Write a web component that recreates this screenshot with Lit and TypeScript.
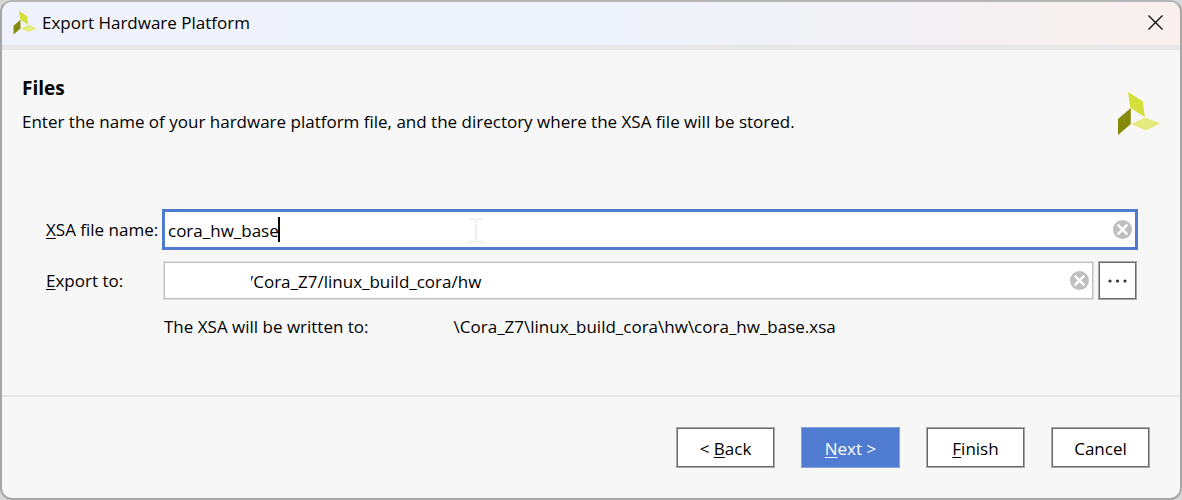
import { LitElement, html, css, svg } from "lit";
import { customElement, property, state } from "lit/decorators.js";

@customElement("brand-mark")
class BrandMark extends LitElement {
  static styles = css`
    :host {
      display: block;
      flex: none;
    }
    svg {
      display: block;
      width: 100%;
      height: 100%;
    }
  `;
  render() {
    return html`<svg viewBox="0 0 44 44" aria-hidden="true">
      <path d="M11 0 25.8 9.2 27.8 25 13.5 16Z" fill="#d5df3a" />
      <path d="M1 27 13.8 16V32L1 43Z" fill="#858a0c" />
      <path d="M14 32 28 25.5 43.5 31.3 29 38.5Z" fill="#e4ea7c" />
    </svg>`;
  }
}

@customElement("clear-button")
class ClearButton extends LitElement {
  @property() label = "Clear";
  static styles = css`
    :host {
      display: block;
      flex: none;
    }
    button {
      display: block;
      width: 19px;
      height: 19px;
      padding: 0;
      border: 0;
      background: none;
    }
    svg {
      display: block;
    }
  `;
  render() {
    return html`<button type="button" aria-label=${this.label}>
      ${svg`<svg width="19" height="19" viewBox="0 0 19 19">
        <circle cx="9.5" cy="9.5" r="9.5" fill="#bfbfbf" />
        <path d="M4.7 4.7 14.3 14.3M14.3 4.7 4.7 14.3" stroke="#fff" stroke-width="2.4" />
      </svg>`}
    </button>`;
  }
}

@customElement("app-root")
class AppRoot extends LitElement {
  @state() private fileName = "cora_hw_base";
  @state() private directory = "/Cora_Z7/linux_build_cora/hw";

  static styles = css`
    :host {
      display: block;
      min-height: 100vh;
      box-sizing: border-box;
      background: #d8d8d8;
      color: #000;
      font: 17px/24px "Open Sans", "Segoe UI", sans-serif;
    }
    * {
      box-sizing: border-box;
    }
    .window {
      display: flex;
      flex-direction: column;
      min-height: 100vh;
      border: 2px solid #a6a6a6;
      border-top-color: #b5b5b5;
      border-radius: 12px;
      overflow: hidden;
      background: #f7f7f7;
    }
    .titlebar {
      display: flex;
      align-items: center;
      gap: 5px;
      height: 48px;
      padding: 0 17px 2px 11px;
      border-bottom: 5px solid #e6e6e6;
      background: linear-gradient(90deg, #eff2fa 0%, #eff3fb 50%, #f2f1f5 75%, #f9f0ee 100%);
    }
    .small-mark {
      width: 24px;
      height: 24px;
    }
    .title {
      flex: 1;
      margin: 0;
      font-size: 17px;
      font-weight: 400;
    }
    .close {
      width: 15px;
      height: 15px;
      padding: 0;
      border: 0;
      background: none;
    }
    .close svg {
      display: block;
    }
    .intro {
      display: flex;
      justify-content: space-between;
      padding: 26px 19px 0 20px;
    }
    .intro h2 {
      margin: 0 0 10px;
      font-size: 19px;
      line-height: 24px;
      font-weight: 700;
    }
    .intro p {
      margin: 0;
    }
    .large-mark {
      width: 44px;
      height: 44px;
      margin-top: 16px;
    }
    .form {
      display: grid;
      grid-template-columns: 116px 1fr;
      row-gap: 11px;
      align-items: center;
      flex: 1;
      align-content: start;
      padding: 73px 42px 0 44px;
    }
    label {
      white-space: nowrap;
    }
    u {
      text-decoration-thickness: 1px;
      text-underline-offset: 2px;
    }
    .field {
      display: flex;
      align-items: center;
      flex: 1;
      min-width: 0;
      background: #fff;
    }
    .field input {
      border: 0;
      outline: 0;
      padding: 2px 0 0;
      height: 30px;
      background: none;
      color: inherit;
      font: inherit;
    }
    .focused {
      position: relative;
      height: 41px;
      padding: 0 3px;
      border: 3px solid #4f7bd0;
    }
    .focused input {
      field-sizing: content;
    }
    .caret {
      width: 2px;
      height: 25px;
      margin-left: -1px;
      background: #000;
    }
    .spring {
      flex: 1;
    }
    .pointer {
      position: absolute;
      left: 304px;
      top: 6px;
    }
    .path-row {
      display: flex;
      gap: 4px;
      padding-left: 1px;
      padding-right: 1px;
    }
    .plain {
      height: 39px;
      padding-right: 4px;
      border: 1px solid #dedede;
      box-shadow: inset 0 0 0 1px #c0c0c0;
    }
    .plain input {
      flex: 1;
      min-width: 0;
      margin-left: 87px;
      text-indent: -4px;
    }
    .browse {
      display: grid;
      place-items: center;
      width: 39px;
      height: 39px;
      padding: 0;
      border: 1px solid #a8a8a8;
      box-shadow: inset 0 0 0 1px #6a6a6a;
      background: #fff;
    }
    .result {
      display: flex;
      grid-column: 2;
      gap: 85px;
      padding-left: 2px;
      margin: 4px 0 0;
    }
    .actions {
      display: flex;
      justify-content: flex-end;
      gap: 26px;
      padding: 30px 30px 30px;
      border-top: 2px solid #e6e6e6;
    }
    .action {
      width: 99px;
      height: 41px;
      padding: 2px 0 0;
      border: 1px solid #a8a8a8;
      box-shadow: inset 0 0 0 1px #6a6a6a;
      background: #fff;
      color: #000;
      font: inherit;
    }
    .primary {
      border-color: #82a3de;
      box-shadow: none;
      background: #4f7bd0;
      color: #fff;
    }
  `;

  render() {
    return html`<div class="window">
      <header class="titlebar">
        <brand-mark class="small-mark"></brand-mark>
        <h1 class="title">Export Hardware Platform</h1>
        <button class="close" type="button" aria-label="Close">
          <svg width="15" height="15" viewBox="0 0 15 15">
            <path d="M0.5 0.5 14.5 14.5M14.5 0.5 0.5 14.5" stroke="#111" stroke-width="1.4" />
          </svg>
        </button>
      </header>
      <section class="intro">
        <div>
          <h2>Files</h2>
          <p>Enter the name of your hardware platform file, and the directory where the XSA file will be stored.</p>
        </div>
        <brand-mark class="large-mark"></brand-mark>
      </section>
      <section class="form">
        <label for="name"><u>X</u>SA file name:</label>
        <div class="field focused">
          <input id="name" type="text" spellcheck="false" .value=${this.fileName} />
          <span class="caret"></span>
          <span class="spring"></span>
          <svg class="pointer" width="14" height="25" viewBox="0 0 14 25" fill="none" stroke="#f0f0f0" stroke-width="2" aria-hidden="true">
            <path d="M0 1H6M8 1H14M7 2V23M0 24H6M8 24H14" />
          </svg>
          <clear-button label="Clear file name"></clear-button>
        </div>
        <label for="dir"><u>E</u>xport to:</label>
        <div class="path-row">
          <div class="field plain">
            <input id="dir" type="text" spellcheck="false" .value=${this.directory} />
            <clear-button label="Clear directory"></clear-button>
          </div>
          <button class="browse" type="button" aria-label="Browse">
            <svg width="19" height="4" viewBox="0 0 19 4" fill="#333">
              <circle cx="2" cy="2" r="1.6" />
              <circle cx="9.5" cy="2" r="1.6" />
              <circle cx="17" cy="2" r="1.6" />
            </svg>
          </button>
        </div>
        <p class="result">
          <span>The XSA will be written to:</span>
          <span>\\Cora_Z7\\linux_build_cora\\hw\\cora_hw_base.xsa</span>
        </p>
      </section>
      <footer class="actions">
        <button class="action" type="button">&lt; <u>B</u>ack</button>
        <button class="action primary" type="button"><u>N</u>ext &gt;</button>
        <button class="action" type="button"><u>F</u>inish</button>
        <button class="action" type="button">Cancel</button>
      </footer>
    </div>`;
  }
}
